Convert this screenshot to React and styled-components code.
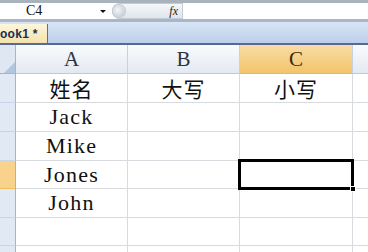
import React from 'react';
import styled, { createGlobalStyle } from 'styled-components';

const GlobalStyle = createGlobalStyle`
  html, body {
    margin: 0;
    padding: 0;
    background: #fff;
    overflow: hidden;
  }
`;

const columns = ['A', 'B', 'C', 'D'];
const rows = [
  ['姓名', '大写', '小写'],
  ['Jack', '', ''],
  ['Mike', '', ''],
  ['Jones', '', ''],
  ['John', '', ''],
  ['', '', ''],
  ['', '', ''],
];
const rowHeights = [29, 29, 29, 28, 29, 28];
const active = { row: 3, col: 2 };

const Window = styled.div`
  width: 368px;
  height: 252px;
  display: flex;
  flex-direction: column;
  overflow: hidden;
  font-family: "Liberation Sans", Arial, sans-serif;
`;

const FormulaBar = styled.div`
  flex-shrink: 0;
  display: flex;
  height: 22px;
  box-sizing: border-box;
  border-top: 3px solid #a9b3bd;
  border-bottom: 3px solid #a8b6c6;
  background: #fff;
`;

const NameBox = styled.div`
  flex-shrink: 0;
  width: 110px;
  display: flex;
  align-items: center;
  padding-left: 26px;
  box-sizing: border-box;
  font-family: "Liberation Serif", "Times New Roman", serif;
  font-size: 14px;
  color: #111;
`;

const DropArrow = styled.span`
  margin-left: auto;
  margin-right: 4px;
  width: 0;
  height: 0;
  border-left: 3px solid transparent;
  border-right: 3px solid transparent;
  border-top: 3px solid #111;
`;

const FxBox = styled.div`
  flex-shrink: 0;
  width: 71px;
  margin: 0 1px 0 2px;
  display: flex;
  align-items: center;
  justify-content: space-between;
  border-radius: 9px 0 0 9px;
  background: linear-gradient(#f7f9fb, #dfe4ea);
  box-shadow: inset 0 0 0 1px #c3cbd4;
`;

const Knob = styled.span`
  width: 12px;
  height: 12px;
  margin-left: 1px;
  border-radius: 50%;
  background: radial-gradient(circle at 40% 40%, #f4f6f8, #b9c2cc);
  box-shadow: 0 0 0 1px #c2c9d1;
`;

const FxLabel = styled.span`
  font-family: "Liberation Serif", "Times New Roman", serif;
  font-style: italic;
  font-size: 12px;
  color: #222;
  margin-right: 5px;
`;

const FormulaInput = styled.div`
  flex: 1;
  background: #fff;
`;

const TabBar = styled.div`
  flex-shrink: 0;
  height: 23px;
  box-sizing: border-box;
  display: flex;
  align-items: flex-end;
  background: linear-gradient(#d9e5f6, #bccfeb);
  border-bottom: 2px solid #566a93;
  overflow: hidden;
`;

const SheetTab = styled.div`
  height: 19px;
  display: flex;
  align-items: center;
  margin-left: -9px;
  padding: 0 9px 0 0;
  background: linear-gradient(#fdf6dd, #f4e2ad);
  border-right: 1px solid #5e6f8f;
  font-weight: bold;
  font-size: 12px;
  color: #1b2e4e;
  letter-spacing: 0.3px;
  white-space: nowrap;
`;

const Grid = styled.div`
  flex: 1;
  min-height: 0;
  overflow: hidden;
  display: grid;
  grid-template-columns: 16px 112px 112px 113px 112px;
  grid-template-rows: 29px ${rowHeights.map((h) => `${h}px`).join(' ')} 28px;
`;

const Corner = styled.div`
  background: #dfe7f3;
  border-right: 1px solid #9eb6ce;
  border-bottom: 1px solid #9eb6ce;
  display: flex;
  align-items: flex-end;
  justify-content: flex-end;
`;

const ColHead = styled.div`
  display: flex;
  align-items: center;
  justify-content: center;
  background: ${(p) =>
    p.$active
      ? 'linear-gradient(#f9dca5, #f2c46c)'
      : 'linear-gradient(#f9fbfd, #e3e9f2)'};
  border-right: 1px solid #c5d2e2;
  border-bottom: 1px solid ${(p) => (p.$active ? '#f2b84f' : '#bccbdc')};
  font-family: "Liberation Serif", "Times New Roman", serif;
  font-size: 21px;
  color: ${(p) => (p.$active ? '#3b2a08' : '#2c3440')};
`;

const RowHead = styled.div`
  background: ${(p) => (p.$active ? '#f9d38c' : '#e1e9f5')};
  border-right: 1px solid #9eb6ce;
  border-bottom: 1px solid ${(p) => (p.$active ? '#f0bd5e' : '#c8d5e6')};
`;

const Cell = styled.div`
  position: relative;
  display: flex;
  align-items: center;
  justify-content: center;
  border-right: 1px solid #d7dbe0;
  border-bottom: 1px solid #d7dbe0;
  font-family: "Liberation Serif", "Times New Roman", "Noto Sans CJK SC", serif;
  font-size: 22px;
  letter-spacing: 1.2px;
  color: #111;
  white-space: nowrap;

  ${(p) =>
    p.$selected &&
    `
    &::before {
      content: '';
      position: absolute;
      left: -2px;
      top: -2px;
      right: -2px;
      bottom: -2px;
      border: 3px solid #000;
      z-index: 2;
    }
    &::after {
      content: '';
      position: absolute;
      right: -4px;
      bottom: -4px;
      width: 4px;
      height: 4px;
      background: #000;
      border: 1px solid #fff;
      z-index: 3;
    }
  `}
`;

const CjkText = styled.span`
  font-family: "Noto Sans CJK SC", sans-serif;
  font-size: 21px;
  letter-spacing: 1px;
`;

const isCjk = (s) => /[\u4e00-\u9fff]/.test(s);

export default function App() {
  return (
    <>
      <GlobalStyle />
      <Window>
        <FormulaBar>
          <NameBox>
            C4
            <DropArrow />
          </NameBox>
          <FxBox>
            <Knob />
            <FxLabel>fx</FxLabel>
          </FxBox>
          <FormulaInput />
        </FormulaBar>
        <TabBar>
          <SheetTab>Book1 *</SheetTab>
        </TabBar>
        <Grid>
          <Corner>
            <svg width="11" height="11" viewBox="0 0 11 11">
              <polygon points="11,0 11,11 0,11" fill="#b3c6e0" />
            </svg>
          </Corner>
          {columns.map((c, i) => (
            <ColHead key={c} $active={i === active.col}>
              {c}
            </ColHead>
          ))}
          {rows.map((r, ri) => (
            <React.Fragment key={ri}>
              <RowHead $active={ri === active.row} />
              {r.map((v, ci) => (
                <Cell key={ci} $selected={ri === active.row && ci === active.col}>
                  {isCjk(v) ? <CjkText>{v}</CjkText> : v}
                </Cell>
              ))}
              <Cell />
            </React.Fragment>
          ))}
        </Grid>
      </Window>
    </>
  );
}
